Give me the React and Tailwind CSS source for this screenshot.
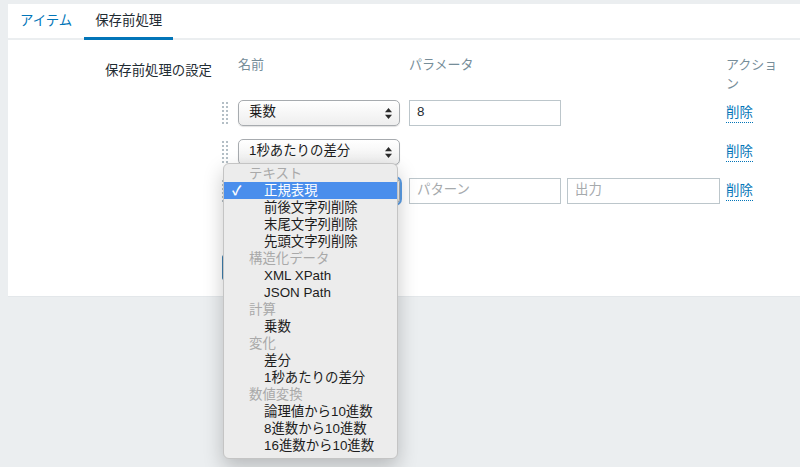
import React from "react";

const FONT = { fontFamily: '"Liberation Sans", "Noto Sans CJK JP", sans-serif' };

function Handle() {
  const dots = [];
  for (let r = 0; r < 6; r++) {
    for (let c = 0; c < 2; c++) {
      dots.push(<rect key={r + "-" + c} x={c * 4} y={r * 4} width="2" height="2" fill="#b4bfc6" />);
    }
  }
  return (
    <div className="w-[16px] flex items-center">
      <svg width="6" height="22" viewBox="0 0 6 22">{dots}</svg>
    </div>
  );
}

function Select({ label, focus }) {
  return (
    <div
      className={
        "relative w-[162px] h-[26px] rounded-[5px] border border-[#a7abaf] bg-linear-to-b from-white to-[#eeeeee] shadow-[0_1px_1px_rgba(0,0,0,0.12)] flex items-center pl-[10px] text-[13.4px] text-[#1b1b1b] " +
        (focus ? "ring-2 ring-[#5b9ee6]" : "")
      }
    >
      {label}
      <svg className="absolute right-[7px] top-[7px]" width="7" height="11" viewBox="0 0 7 11">
        <path d="M3.5 0 L7 4.2 H0 Z" fill="#2a2a2a" />
        <path d="M0 6.8 H7 L3.5 11 Z" fill="#2a2a2a" />
      </svg>
    </div>
  );
}

function Input({ value, placeholder, w = "w-[152px]" }) {
  return (
    <div className={w + " h-[26px] border border-[#bcc6cb] bg-white flex items-center pl-[7px] text-[13.4px]"}>
      {value ? <span className="text-[#1f2c33]">{value}</span> : <span className="text-[#a6aaad]">{placeholder}</span>}
    </div>
  );
}

function Del() {
  return (
    <span className="inline-block leading-[19px] text-[13.4px] text-[#0275b8] border-b border-dotted border-[#0275b8]">削除</span>
  );
}

function Row({ children, handle = true }) {
  return (
    <div className="h-[39px] flex items-center">
      {handle ? <Handle /> : <div className="w-[16px]" />}
      {children}
    </div>
  );
}

const menu = [
  { t: "テキスト", h: true },
  { t: "正規表現", sel: true },
  { t: "前後文字列削除" },
  { t: "末尾文字列削除" },
  { t: "先頭文字列削除" },
  { t: "構造化データ", h: true },
  { t: "XML XPath" },
  { t: "JSON Path" },
  { t: "計算", h: true },
  { t: "乗数" },
  { t: "変化", h: true },
  { t: "差分" },
  { t: "1秒あたりの差分" },
  { t: "数値変換", h: true },
  { t: "論理値から10進数" },
  { t: "8進数から10進数" },
  { t: "16進数から10進数" },
];

export default function App() {
  return (
    <div className="relative w-[800px] h-[467px] overflow-hidden bg-[#ebeef0] pt-[4px] pl-[8px]" style={FONT}>
      <div className="bg-white h-[293px] w-[792px] border-b border-[#e3e7ea]">
        {/* tabs */}
        <div className="flex h-[36px] border-b-2 border-[#ebeef0]">
          <div className="px-3 pt-[7px] text-[13.4px] leading-[19px] text-[#0275b8]">アイテム</div>
          <div className="h-[36px] px-[11px] pt-[7px] text-[13.4px] leading-[19px] text-[#1f2c33] border-b-[3px] border-[#0275b8]">
            保存前処理
          </div>
        </div>

        {/* form */}
        <div className="flex pt-[15px]">
          <div className="w-[204px] text-right mt-[6px] text-[13.4px] leading-[19px] text-[#1f2c33]">保存前処理の設定</div>
          <div className="ml-[10px] flex flex-col">
            <div className="h-[38px] flex text-[13px] leading-[19px] text-[#768d99]">
              <div className="w-[16px]" />
              <div className="w-[171px]">名前</div>
              <div className="w-[317px]">パラメータ</div>
              <div className="w-[58px]">アクション</div>
            </div>

            <Row>
              <div className="w-[171px]"><Select label="乗数" /></div>
              <div className="w-[317px]"><Input value="8" /></div>
              <Del />
            </Row>
            <Row>
              <div className="w-[171px]"><Select label="1秒あたりの差分" /></div>
              <div className="w-[317px]" />
              <Del />
            </Row>
            <Row>
              <div className="w-[171px]"><Select label="" focus /></div>
              <div className="w-[317px] flex gap-[6px]">
                <Input placeholder="パターン" />
                <Input placeholder="出力" w="w-[153px]" />
              </div>
              <Del />
            </Row>

            <div className="h-[36px]" />
            <div className="mt-[9px] flex gap-[10px]">
              <div className="h-[25px] w-[70px] bg-[#3f7fae] rounded-[2px]" />
            </div>
          </div>
        </div>
      </div>

      {/* dropdown menu */}
      <div className="absolute left-[223px] top-[163px] w-[175px] h-[296px] rounded-[6px] bg-[#ececec] border border-[#c4c4c4] shadow-[0_8px_20px_rgba(0,0,0,0.22)] pt-[1px] overflow-hidden">
        {menu.map((m, i) => (
          <div
            key={i}
            className={
              "relative h-[17px] leading-[17px] text-[13.4px] whitespace-nowrap " +
              (m.h ? "pl-[25px] text-[#a9a9a9]" : "pl-[40px] text-[#1c1c1c]") +
              (m.sel ? " bg-[#4a8eec] text-white" : "")
            }
          >
            {m.sel && <span className="absolute left-[8px] top-0 text-white font-bold text-[13px]">✓</span>}
            {m.t}
          </div>
        ))}
      </div>
    </div>
  );
}
